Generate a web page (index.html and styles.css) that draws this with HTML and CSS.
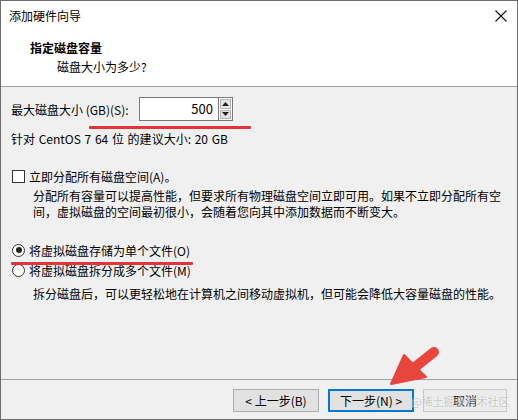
FILE: index.html
```html
<!DOCTYPE html>
<html lang="zh-CN">
<head>
  <meta charset="UTF-8">
  <title>添加硬件向导</title>
  <link rel="stylesheet" href="styles.css">
</head>
<body>

<div class="window">

  <!-- 标题栏 -->
  <div class="titlebar">
    <span class="title">添加硬件向导</span>
    <svg class="close" width="12" height="12" viewBox="0 0 12 12">
      <path d="M0.5 0.5 L11.5 11.5 M11.5 0.5 L0.5 11.5" stroke="#111" stroke-width="1.1" fill="none"/>
    </svg>
  </div>

  <!-- 向导页头 -->
  <div class="header">
    <div class="header-title">指定磁盘容量</div>
    <div class="header-sub">磁盘大小为多少?</div>
  </div>

  <div class="content">
    <div class="size-row">
      <label>最大磁盘大小 (GB)(S):</label>
      <div class="spin">
        <div class="spin-value">500</div>
        <div class="spin-btns">
          <div class="spin-btn">
            <svg width="7" height="4" viewBox="0 0 7 4"><path d="M0 4 L3.5 0 L7 4 Z" fill="#222"/></svg>
          </div>
          <div class="spin-btn">
            <svg width="7" height="4" viewBox="0 0 7 4"><path d="M0 0 L3.5 4 L7 0 Z" fill="#222"/></svg>
          </div>
        </div>
      </div>
    </div>
    <div class="hint">针对 CentOS 7 64 位 的建议大小: 20 GB</div>

    <div class="option option-check">
      <span class="checkbox"></span>
      <span>立即分配所有磁盘空间(A)。</span>
    </div>
    <div class="desc">分配所有容量可以提高性能，但要求所有物理磁盘空间立即可用。如果不立即分配所有空间，虚拟磁盘的空间最初很小，会随着您向其中添加数据而不断变大。</div>

    <div class="radios">
      <div class="option">
        <span class="radio checked"></span>
        <span>将虚拟磁盘存储为单个文件(O)</span>
      </div>
      <div class="option">
        <span class="radio"></span>
        <span>将虚拟磁盘拆分成多个文件(M)</span>
      </div>
    </div>
    <div class="desc desc-split">拆分磁盘后，可以更轻松地在计算机之间移动虚拟机，但可能会降低大容量磁盘的性能。</div>
  </div>

  <div class="footer">
    <button class="btn">&lt; 上一步(B)</button>
    <button class="btn btn-default">下一步(N) &gt;</button>
    <button class="btn btn-cancel">取消</button>
  </div>

  <!-- 标注 -->
  <div class="mark mark-size"></div>
  <div class="mark mark-single"></div>
  <svg class="arrow" width="60" height="50" viewBox="380 340 60 50">
    <path d="M433 351 L413 367" stroke="#e8453c" stroke-width="10" stroke-linecap="round" fill="none"/>
    <path d="M403 354 L425 376 L390 383 Z" fill="#e8453c" stroke="#e8453c" stroke-width="2" stroke-linejoin="round"/>
  </svg>
  <div class="watermark">@稀土掘金技术社区</div>
</div>

</body>
</html>
```

FILE: styles.css
```css
body {
  margin: 0;
  font-family: "Noto Sans CJK SC", sans-serif;
  font-size: 12px;
  color: #000;
}

.window {
  position: relative;
  width: 518px;
  height: 420px;
  box-sizing: border-box;
  border: 1px solid #6d6d6d;
  display: flex;
  flex-direction: column;
  background: #f0f0f0;
}

.titlebar {
  height: 29px;
  background: #fff;
  display: flex;
  align-items: center;
  justify-content: space-between;
  padding: 0 10px 0 8px;
}

.title {
  font-size: 12px;
}

.header {
  height: 57px;
  background: #fff;
  border-bottom: 1px solid #a0a0a0;
  box-sizing: border-box;
  padding: 9px 0 0 29px;
}

.header-title {
  font-weight: bold;
  line-height: 18px;
}

.header-sub {
  line-height: 18px;
  margin-left: 27px;
  margin-top: 1px;
}

.content {
  flex: 1;
  padding: 10px 10px 0 10px;
}

.size-row {
  display: flex;
  align-items: center;
  height: 24px;
}

.size-row label {
  width: 128px;
}

.spin {
  display: flex;
  height: 24px;
}

.spin-value {
  width: 73px;
  height: 22px;
  line-height: 22px;
  background: #fff;
  border: 1px solid #7a7a7a;
  border-right: none;
  text-align: right;
  padding-right: 5px;
  font-size: 13px;
}

.spin-btns {
  width: 15px;
  border: 1px solid #7a7a7a;
  background: #fff;
  display: flex;
  flex-direction: column;
  padding: 1px;
  box-sizing: border-box;
  gap: 1px;
}

.spin-btn {
  flex: 1;
  background: #e5e5e5;
  border: 1px solid #b5b5b5;
  display: flex;
  align-items: center;
  justify-content: center;
}

.hint {
  margin-top: 10px;
  line-height: 16px;
  word-spacing: 1px;
}

.option {
  display: flex;
  align-items: center;
  height: 20px;
}

.option-check {
  margin-top: 19px;
}

.checkbox {
  width: 11px;
  height: 11px;
  border: 1px solid #333;
  background: #fff;
  margin: 0 4px 0 1px;
}

.radio {
  width: 11px;
  height: 11px;
  border: 1px solid #333;
  border-radius: 50%;
  background: #fff;
  margin: 0 4px 0 1px;
  position: relative;
}

.radio.checked::after {
  content: '';
  position: absolute;
  left: 2.5px;
  top: 2.5px;
  width: 6px;
  height: 6px;
  border-radius: 50%;
  background: #222;
}

.desc {
  margin: 2px 0 0 22px;
  line-height: 16px;
  width: 470px;
}

.radios {
  margin-top: 20px;
}

.desc-split {
  margin-top: 6px;
}

.footer {
  height: 40px;
  border-top: 1px solid #a0a0a0;
  box-sizing: border-box;
  display: flex;
  justify-content: flex-end;
  align-items: flex-start;
  gap: 9px;
  padding: 9px 10px 0 0;
}

.btn {
  font-family: inherit;
  font-size: 12px;
  width: 86px;
  height: 23px;
  background: #e1e1e1;
  border: 1px solid #adadad;
  padding: 0;
  color: #000;
}

.btn-default {
  border: 2px solid #0078d7;
}

.btn-cancel {
  width: 84px;
  background: #ececec;
  border-color: #c8c8c8;
}

.mark {
  position: absolute;
  height: 3px;
  background: #e0363a;
  border-radius: 1px;
}

.mark-size {
  left: 88px;
  top: 125px;
  width: 162px;
}

.mark-single {
  left: 10px;
  top: 261px;
  width: 182px;
}

.arrow {
  position: absolute;
  left: 380px;
  top: 340px;
}

.watermark {
  position: absolute;
  left: 410px;
  top: 393px;
  font-size: 11px;
  line-height: 14px;
  color: rgba(160, 160, 160, 0.55);
  text-shadow: 0 0 2px rgba(255, 255, 255, 0.9);
}
```
